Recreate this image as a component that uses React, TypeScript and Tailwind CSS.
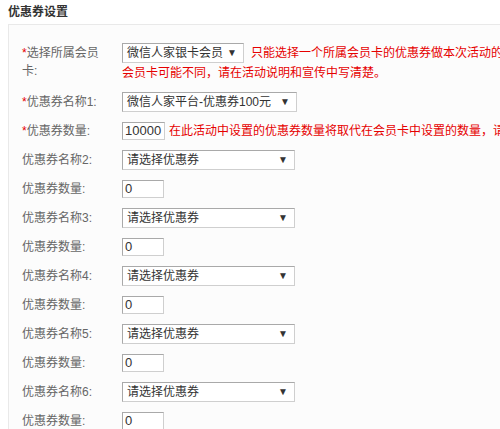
import React from "react";

const font = {
  fontFamily: '"Liberation Sans", "Noto Sans CJK SC", sans-serif',
};

function FakeSelect({ value, width }: { value: string; width: string }) {
  return (
    <span
      className={`inline-flex h-[20px] ${width} items-center justify-between border border-[#a9a9a9] border-r-[#cfcfcf] border-b-[#cfcfcf] bg-white pl-[4px] pr-[6px] align-top text-[12px] leading-[18px] text-[#333]`}
    >
      <span className="whitespace-nowrap">{value}</span>
      <span className="text-[10px] text-[#333]">▼</span>
    </span>
  );
}

function FakeInput({ value, width }: { value: string; width: string }) {
  return (
    <span
      className={`inline-block h-[18px] ${width} border border-[#a9a9a9] border-r-[#cfcfcf] border-b-[#cfcfcf] bg-white pl-[2px] align-middle text-[13px] leading-[16px] text-[#333]`}
    >
      {value}
    </span>
  );
}

function Row({
  label,
  required,
  children,
}: {
  label: string;
  required?: boolean;
  children: React.ReactNode;
}) {
  return (
    <div className="flex items-start">
      <div className="w-[113px] shrink-0 pl-[13px] pr-[10px] text-[12px] leading-[18px] text-[#666]">
        <div className="flex min-h-[20px] items-center">
          <span>
            {required && <span className="text-[#e60000]">*</span>}
            {label}
          </span>
        </div>
      </div>
      <div className="flex min-h-[20px] items-center">{children}</div>
    </div>
  );
}

export default function App() {
  const coupons = [2, 3, 4, 5, 6];

  return (
    <div className="h-[429px] w-[500px] overflow-hidden bg-white" style={font}>
      <div className="h-[24px] pl-[8px] text-[12px] font-bold leading-[24px] text-[#333]">
        优惠券设置
      </div>
      <div className="ml-[8px] w-[760px] border-l border-t border-[#e9e9e9] bg-[#fcfcfc] pt-[18px]">
        <div className="flex flex-col gap-[9px]">
          {/* 会员卡 */}
          <div className="flex items-start">
            <div className="w-[113px] shrink-0 pl-[13px] pr-[10px] pt-[1px] text-[12px] leading-[18px] text-[#666]">
              <span className="text-[#e60000]">*</span>选择所属会员卡:
            </div>
            <div className="text-[12px] leading-[20px] text-[#e60000]">
              <div className="flex items-center whitespace-nowrap">
                <FakeSelect value="微信人家银卡会员" width="w-[122px]" />
                <span className="ml-[7px]">
                  只能选择一个所属会员卡的优惠券做本次活动的奖品，不同用户持有的
                </span>
              </div>
              <div className="whitespace-nowrap">
                会员卡可能不同，请在活动说明和宣传中写清楚。
              </div>
            </div>
          </div>

          <Row label="优惠券名称1:" required>
            <FakeSelect value="微信人家平台-优惠券100元" width="w-[175px]" />
          </Row>

          <Row label="优惠券数量:" required>
            <FakeInput value="10000" width="w-[43px]" />
            <span className="ml-[4px] whitespace-nowrap text-[12px] text-[#e60000]">
              在此活动中设置的优惠券数量将取代在会员卡中设置的数量，请注意核对。
            </span>
          </Row>

          {coupons.map((n) => (
            <React.Fragment key={n}>
              <Row label={`优惠券名称${n}:`}>
                <FakeSelect value="请选择优惠券" width="w-[173px]" />
              </Row>
              <Row label="优惠券数量:">
                <FakeInput value="0" width="w-[42px]" />
              </Row>
            </React.Fragment>
          ))}
        </div>
      </div>
    </div>
  );
}
